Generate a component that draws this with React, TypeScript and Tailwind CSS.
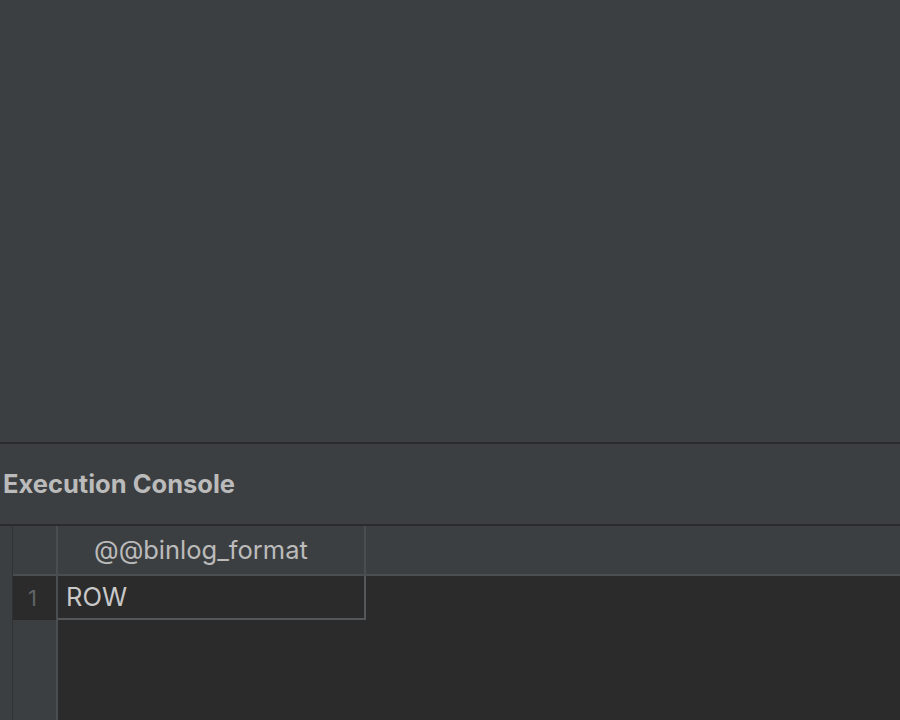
export default function App() {
  return (
    <div
      className="flex h-[720px] w-[900px] flex-col overflow-hidden bg-[#3c3f41] text-[#bbbbbb]"
      style={{ fontFamily: 'Inter, "Noto Sans", sans-serif' }}
    >
      {/* editor area */}
      <div className="h-[442px] shrink-0 bg-[#3c3f41]" />
      <div className="h-[2px] shrink-0 bg-[#2b2b2b]" />

      {/* tool window title */}
      <div className="flex h-[80px] shrink-0 items-center pl-[3px]">
        <span className="text-[25.5px] font-bold text-[#bbbbbb]">Execution Console</span>
      </div>
      <div className="h-[2px] shrink-0 bg-[#2b2b2b]" />

      {/* result grid */}
      <div className="flex min-h-0 flex-1">
        <div className="w-[12px] shrink-0 bg-[#3c3f41]" />
        <div className="w-[1px] shrink-0 bg-[#2f3133]" />

        {/* row numbers */}
        <div className="flex w-[43px] shrink-0 flex-col">
          <div className="h-[48px] shrink-0 bg-[#3c3f41]" />
          <div className="h-[2px] shrink-0 bg-[#4b4e51]" />
          <div className="flex h-[44px] shrink-0 items-center justify-center bg-[#2b2b2b] pr-[4px] text-[22px] text-[#606366]">
            1
          </div>
          <div className="flex-1 bg-[#3c3f41]" />
        </div>
        <div className="w-[2px] shrink-0 bg-[#4b4e51]" />

        {/* data */}
        <div className="flex min-w-0 flex-1 flex-col">
          <div className="flex h-[48px] shrink-0 bg-[#3c3f41]">
            <div className="flex w-[306px] shrink-0 items-center pl-[36px] text-[25.5px] text-[#bbbbbb]">
              @@binlog_format
            </div>
            <div className="w-[2px] shrink-0 bg-[#4b4e51]" />
            <div className="flex-1" />
          </div>
          <div className="h-[2px] shrink-0 bg-[#4b4e51]" />
          <div className="flex-1 bg-[#2b2b2b]">
            <div className="flex h-[44px] w-[308px] items-center border-2 border-t-0 border-l-0 border-[#55585b] pl-[8px] text-[25.5px] text-[#c8c8c8]">
              ROW
            </div>
          </div>
        </div>
      </div>
    </div>
  )
}
